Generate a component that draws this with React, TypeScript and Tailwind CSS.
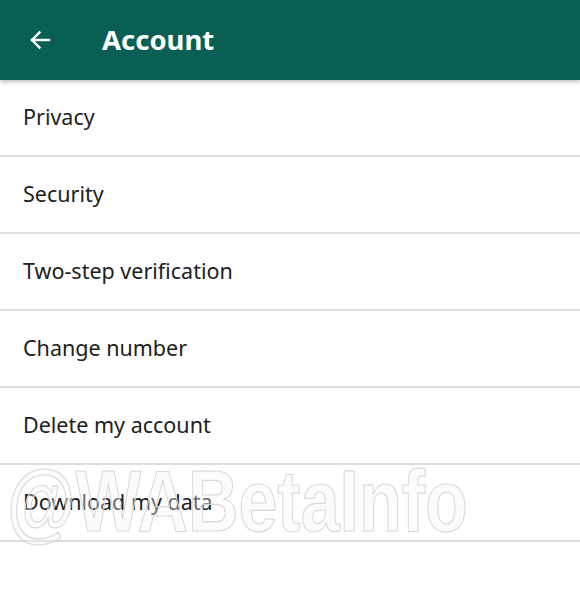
const items = [
  "Privacy",
  "Security",
  "Two-step verification",
  "Change number",
  "Delete my account",
  "Download my data",
];

export default function App() {
  return (
    <div className="relative min-h-[612px] w-full overflow-hidden bg-white font-['Noto_Sans',sans-serif]">
      {/* Toolbar */}
      <header className="relative z-10 flex h-[80px] items-center bg-[#0a5f55] shadow-[0_2px_4px_rgba(0,0,0,0.25)]">
        <svg
          className="ml-[28px] h-[24px] w-[24px]"
          viewBox="0 0 24 24"
          fill="none"
          stroke="white"
          strokeWidth="2.4"
          strokeLinecap="square"
        >
          <path d="M21 12H4" />
          <path d="M11.5 4.5L4 12l7.5 7.5" />
        </svg>
        <h1 className="ml-[50px] text-[27.5px] font-bold leading-none text-white">Account</h1>
      </header>

      {/* Settings list */}
      <ul>
        {items.map((label) => (
          <li
            key={label}
            className="flex h-[77px] items-center border-b-2 border-[#dedede] pl-[23px] text-[21.5px] text-[#212121]"
          >
            {label}
          </li>
        ))}
      </ul>

      {/* Watermark */}
      <div className="pointer-events-none absolute left-[7px] top-[457px] z-20 origin-left scale-x-[0.795] whitespace-nowrap font-['Liberation_Sans',sans-serif] text-[88px] font-bold leading-none text-[rgba(245,245,248,0.35)] [-webkit-text-stroke:1.2px_#d8d8d8]">
        @WABetaInfo
      </div>
    </div>
  );
}
